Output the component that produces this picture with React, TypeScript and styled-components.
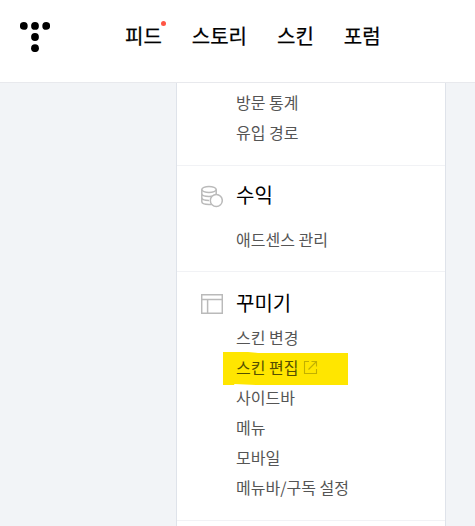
import React from "react";
import styled, { createGlobalStyle } from "styled-components";

const GlobalStyle = createGlobalStyle`
  * { box-sizing: border-box; }
  body {
    margin: 0;
    background: #f2f4f7;
    font-family: "Noto Sans CJK KR", "Noto Sans", sans-serif;
    overflow: hidden;
  }
`;

const Page = styled.div`
  display: flex;
  flex-direction: column;
  height: 526px;
  overflow: hidden;
`;

const Header = styled.header`
  display: flex;
  align-items: flex-start;
  flex: 0 0 83px;
  padding-left: 20px;
  background: #fff;
  border-bottom: 1px solid #e8e9ed;
`;

const Logo = styled.svg`
  flex: none;
  width: 30px;
  height: 30px;
  margin: 22px 75px 0 0;
`;

const Nav = styled.nav`
  display: flex;
  gap: 30px;
  padding-top: 22px;
`;

const NavLink = styled.a`
  position: relative;
  color: #000;
  font-size: 20px;
  font-weight: 400;
  -webkit-text-stroke: 0.25px #000;
  line-height: 28px;
  white-space: nowrap;
`;

const NewDot = styled.span`
  position: absolute;
  top: -1px;
  right: -4px;
  width: 5px;
  height: 5px;
  border-radius: 50%;
  background: #ff5544;
`;

const Sidebar = styled.aside`
  flex: 1;
  width: 270px;
  margin-left: 176px;
  background: #fff;
  border: solid #dfe3ea;
  border-width: 0 1px;
`;

const Section = styled.section<{ $height: number; $top: number }>`
  height: ${(p) => p.$height}px;
  padding: ${(p) => p.$top}px 0 0 24px;
  border-bottom: 1px solid #f1f2f5;
`;

const Heading = styled.h2<{ $gap: number }>`
  display: flex;
  align-items: center;
  gap: 13px;
  height: 30px;
  margin: 0 0 ${(p) => p.$gap}px;
  color: #000;
  font-size: 20px;
  font-weight: 400;
  line-height: 30px;
`;

const SectionIcon = styled.svg`
  flex: none;
  width: 22px;
  height: 24px;
  margin-top: 2px;
  fill: none;
  stroke: #bababa;
  stroke-width: 1.5;
`;

const Menu = styled.ul`
  margin: 0;
  padding: 0 0 0 35px;
  list-style: none;
`;

const MenuItem = styled.li`
  position: relative;
  display: flex;
  align-items: center;
  height: 30px;
  color: #555;
  font-size: 16px;
  line-height: 30px;
  white-space: nowrap;
`;

const MarkedItem = styled(MenuItem)`
  isolation: isolate;
  color: #555000;
`;

const Marker = styled.span`
  position: absolute;
  z-index: -1;
  top: 0;
  left: -13px;
  width: 125px;
  height: 33px;
  background: #ffe600;
  clip-path: polygon(0 0, 20% 0, 28% 1px, 100% 1px, 100% 33px, 27% 33px, 9% 32px, 9% 33px, 0 33px);
`;

const ExternalIcon = styled.svg`
  width: 15px;
  height: 15px;
  margin-left: 5px;
  fill: none;
  stroke: #c2b000;
  stroke-width: 1.1;
`;

const dots = [[3.8, 3.9], [15, 3.9], [26.2, 3.9], [15, 15], [15, 26.2]];

const CoinsIcon = () => (
  <SectionIcon viewBox="0 0 22 24">
    <ellipse cx="8" cy="5.5" rx="7.2" ry="3" />
    <path d="M.8 5.5v4c0 1.7 3.2 3 7.2 3s7.2-1.3 7.2-3v-4M.8 9.5v4c0 1.7 3.2 3 7.2 3M.8 13.5v4c0 1.7 3.2 3 7.2 3 1 0 2-.1 2.8-.3M15.2 9.5v1" />
    <circle cx="15.3" cy="16.5" r="6" fill="#fff" />
  </SectionIcon>
);

const LayoutIcon = () => (
  <SectionIcon viewBox="0 0 22 24">
    <path d="M.7 2.7h20.6v18.5H.7zM.7 7.6h20.6M6.6 7.6v13.6" />
  </SectionIcon>
);

export default function App() {
  return (
    <>
      <GlobalStyle />
      <Page>
        <Header>
          <Logo viewBox="0 0 30 30">
            {dots.map(([x, y]) => (
              <circle key={`${x}-${y}`} cx={x} cy={y} r="3.9" />
            ))}
          </Logo>
          <Nav>
            <NavLink>피드<NewDot /></NavLink>
            <NavLink>스토리</NavLink>
            <NavLink>스킨</NavLink>
            <NavLink>포럼</NavLink>
          </Nav>
        </Header>
        <Sidebar>
          <Section $height={83} $top={4}>
            <Menu>
              <MenuItem>방문 통계</MenuItem>
              <MenuItem>유입 경로</MenuItem>
            </Menu>
          </Section>
          <Section $height={106} $top={14}>
            <Heading $gap={14}><CoinsIcon />수익</Heading>
            <Menu>
              <MenuItem>애드센스 관리</MenuItem>
            </Menu>
          </Section>
          <Section $height={249} $top={16}>
            <Heading $gap={4}><LayoutIcon />꾸미기</Heading>
            <Menu>
              <MenuItem>스킨 변경</MenuItem>
              <MarkedItem>
                <Marker />
                스킨 편집
                <ExternalIcon viewBox="0 0 15 15">
                  <path d="M6 1.5H1.5v12h12V9M8.5 1.5h5v5M13.5 1.5l-8 8" />
                </ExternalIcon>
              </MarkedItem>
              <MenuItem>사이드바</MenuItem>
              <MenuItem>메뉴</MenuItem>
              <MenuItem>모바일</MenuItem>
              <MenuItem>메뉴바/구독 설정</MenuItem>
            </Menu>
          </Section>
        </Sidebar>
      </Page>
    </>
  );
}
